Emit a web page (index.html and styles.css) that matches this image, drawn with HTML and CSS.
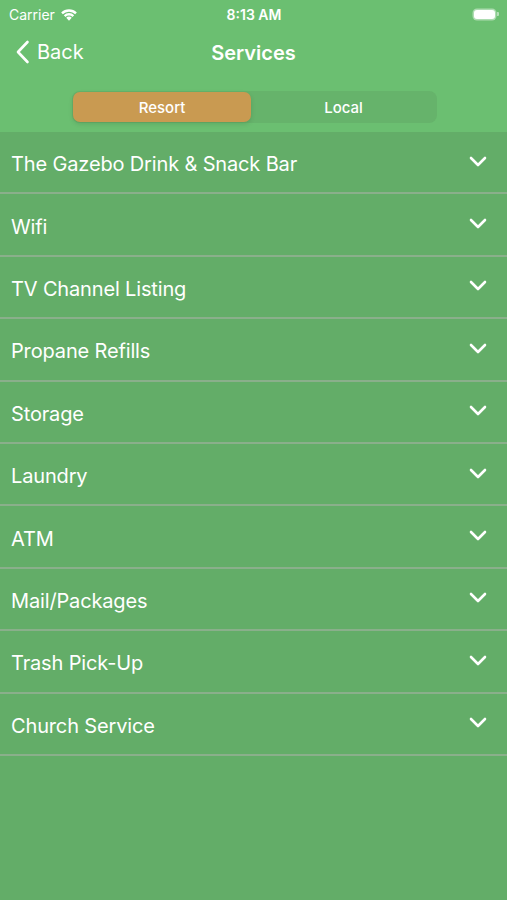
FILE: index.html
```html
<!DOCTYPE html>
<html>
<head>
<meta charset="utf-8">
<link rel="stylesheet" href="styles.css">
</head>
<body>
<div class="screen">
  <header class="top">
    <div class="status">
      <div class="status-left">
        <span class="carrier">Carrier</span>
        <svg class="wifi" width="18" height="13" viewBox="0 0 17 12">
          <path d="M8.5 11.8 L5.9 9.1 A3.6 3.6 0 0 1 11.1 9.1 Z" fill="#fff"/>
          <path d="M3.6 6.7 A6.8 6.8 0 0 1 13.4 6.7 L11.8 8.3 A4.6 4.6 0 0 0 5.2 8.3 Z" fill="#fff"/>
          <path d="M1.1 4.2 A10.3 10.3 0 0 1 15.9 4.2 L14.3 5.8 A8.1 8.1 0 0 0 2.7 5.8 Z" fill="#fff"/>
        </svg>
      </div>
      <span class="time">8:13 AM</span>
      <div class="battery"><div class="battery-fill"></div><div class="battery-tip"></div></div>
    </div>
    <nav class="navbar">
      <div class="back">
        <svg width="14" height="24" viewBox="0 0 14 24"><path d="M11.5 2 L2 12 L11.5 22" fill="none" stroke="#fff" stroke-width="2.6" stroke-linecap="round" stroke-linejoin="round"/></svg>
        <span>Back</span>
      </div>
      <div class="title">Services</div>
    </nav>
    <div class="seg-wrap">
      <div class="segmented">
        <div class="seg seg-active">Resort</div>
        <div class="seg">Local</div>
      </div>
    </div>
  </header>
  <ul class="list">
    <li class="row"><span>The Gazebo Drink &amp; Snack Bar</span><svg class="chev" width="18" height="11" viewBox="0 0 18 11"><path d="M2 2 L9 9 L16 2" fill="none" stroke="#fff" stroke-width="2.6" stroke-linecap="round" stroke-linejoin="round"/></svg></li>
    <li class="row"><span>Wifi</span><svg class="chev" width="18" height="11" viewBox="0 0 18 11"><path d="M2 2 L9 9 L16 2" fill="none" stroke="#fff" stroke-width="2.6" stroke-linecap="round" stroke-linejoin="round"/></svg></li>
    <li class="row"><span>TV Channel Listing</span><svg class="chev" width="18" height="11" viewBox="0 0 18 11"><path d="M2 2 L9 9 L16 2" fill="none" stroke="#fff" stroke-width="2.6" stroke-linecap="round" stroke-linejoin="round"/></svg></li>
    <li class="row"><span>Propane Refills</span><svg class="chev" width="18" height="11" viewBox="0 0 18 11"><path d="M2 2 L9 9 L16 2" fill="none" stroke="#fff" stroke-width="2.6" stroke-linecap="round" stroke-linejoin="round"/></svg></li>
    <li class="row"><span>Storage</span><svg class="chev" width="18" height="11" viewBox="0 0 18 11"><path d="M2 2 L9 9 L16 2" fill="none" stroke="#fff" stroke-width="2.6" stroke-linecap="round" stroke-linejoin="round"/></svg></li>
    <li class="row"><span>Laundry</span><svg class="chev" width="18" height="11" viewBox="0 0 18 11"><path d="M2 2 L9 9 L16 2" fill="none" stroke="#fff" stroke-width="2.6" stroke-linecap="round" stroke-linejoin="round"/></svg></li>
    <li class="row"><span>ATM</span><svg class="chev" width="18" height="11" viewBox="0 0 18 11"><path d="M2 2 L9 9 L16 2" fill="none" stroke="#fff" stroke-width="2.6" stroke-linecap="round" stroke-linejoin="round"/></svg></li>
    <li class="row"><span>Mail/Packages</span><svg class="chev" width="18" height="11" viewBox="0 0 18 11"><path d="M2 2 L9 9 L16 2" fill="none" stroke="#fff" stroke-width="2.6" stroke-linecap="round" stroke-linejoin="round"/></svg></li>
    <li class="row"><span>Trash Pick-Up</span><svg class="chev" width="18" height="11" viewBox="0 0 18 11"><path d="M2 2 L9 9 L16 2" fill="none" stroke="#fff" stroke-width="2.6" stroke-linecap="round" stroke-linejoin="round"/></svg></li>
    <li class="row"><span>Church Service</span><svg class="chev" width="18" height="11" viewBox="0 0 18 11"><path d="M2 2 L9 9 L16 2" fill="none" stroke="#fff" stroke-width="2.6" stroke-linecap="round" stroke-linejoin="round"/></svg></li>
  </ul>
</div>
</body>
</html>
```

FILE: styles.css
```css
html, body {
  margin: 0;
  padding: 0;
}
body {
  background: #63ad68;
  font-family: "Inter", "Liberation Sans", sans-serif;
  color: #fff;
}
.screen {
  width: 507px;
  height: 900px;
  background: #63ad68;
  overflow: hidden;
}
.top {
  background: #6bbf71;
  height: 132px;
  display: flex;
  flex-direction: column;
}
.status {
  height: 28px;
  display: flex;
  align-items: center;
  justify-content: space-between;
  padding: 0 8px 0 9px;
  font-size: 14px;
}
.status-left {
  display: flex;
  align-items: center;
  gap: 5px;
  width: 150px;
}
.carrier {
  font-size: 14px;
  font-weight: 400;
}
.time {
  font-size: 14px;
  font-weight: 600;
}
.battery {
  width: 150px;
  display: flex;
  justify-content: flex-end;
  align-items: center;
}
.battery-fill {
  width: 21px;
  height: 9px;
  background: #fff;
  border-radius: 3px;
  box-shadow: 0 0 0 1.5px rgba(255,255,255,0.45);
}
.battery-tip {
  width: 2px;
  height: 4px;
  margin-left: 2px;
  background: rgba(255,255,255,0.5);
  border-radius: 0 1px 1px 0;
}
.navbar {
  height: 50px;
  display: flex;
  align-items: center;
  justify-content: center;
  position: relative;
}
.back {
  position: absolute;
  left: 16px;
  top: 12px;
  display: flex;
  align-items: center;
  gap: 7px;
  font-size: 20px;
}
.title {
  font-size: 20px;
  font-weight: 600;
}
.seg-wrap {
  display: flex;
  justify-content: center;
  padding-top: 13px;
  padding-left: 2px;
}
.segmented {
  width: 365px;
  height: 32px;
  background: #66b36b;
  border-radius: 8px;
  display: flex;
  padding: 1px;
  box-sizing: border-box;
}
.seg {
  flex: 1;
  display: flex;
  align-items: center;
  justify-content: center;
  font-size: 15px;
  font-weight: 500;
  border-radius: 7px;
}
.seg-active {
  background: #c99a51;
  box-shadow: 0 2px 5px rgba(0,0,0,0.12);
  flex: 0 0 178px;
}
.list {
  list-style: none;
  margin: 0;
  padding: 0;
}
.row {
  height: 56.4px;
  border-bottom: 2px solid #8aaf8b;
  display: flex;
  align-items: center;
  justify-content: space-between;
  padding: 4px 20px 0 11px;
  font-size: 20px;
  font-weight: 400;
  letter-spacing: -0.15px;
}
.chev {
  margin-top: -6px;
}
```
